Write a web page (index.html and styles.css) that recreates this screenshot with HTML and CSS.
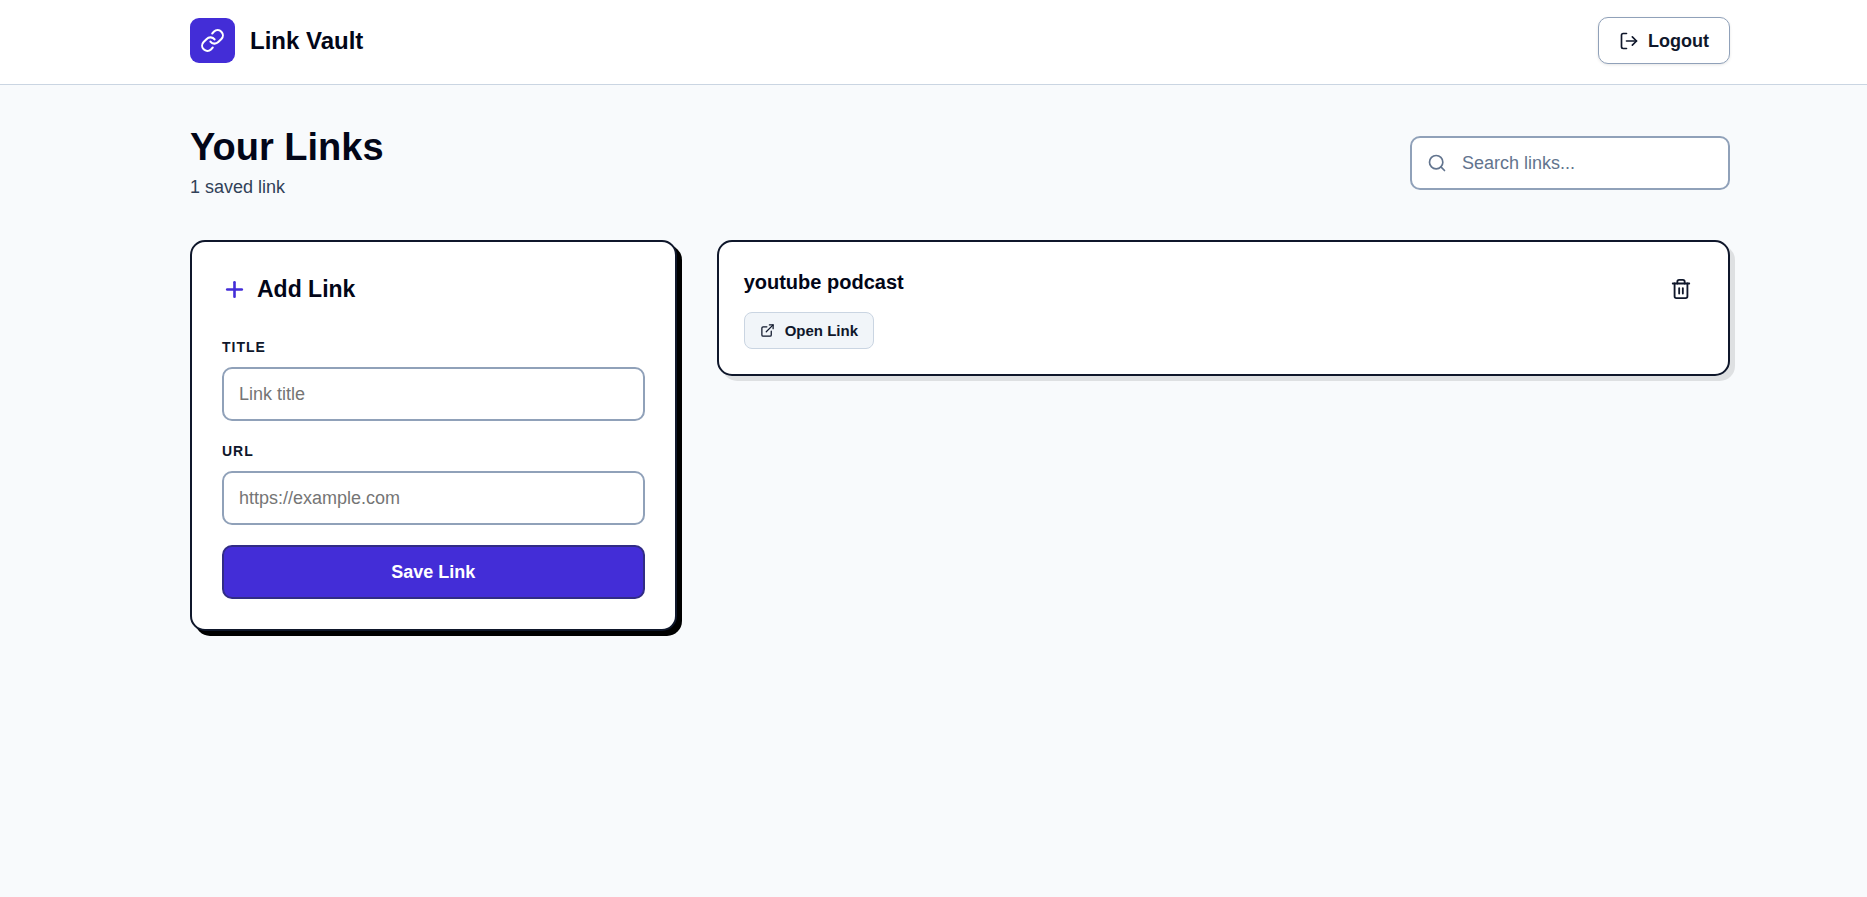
FILE: index.html
```html
<!DOCTYPE html>
<html lang="en">
<head>
    <meta charset="UTF-8">
    <meta name="viewport" content="width=device-width, initial-scale=1.0">
    <title>Link Vault</title>
    <link rel="stylesheet" href="styles.css">
</head>
<body>
    <header class="header">
        <div class="brand">
            <span class="brand-logo">
                <svg class="icon-brand" viewBox="0 0 24 24"><path d="M10 13a5 5 0 0 0 7.54.54l3-3a5 5 0 0 0-7.07-7.07l-1.72 1.71"/><path d="M14 11a5 5 0 0 0-7.54-.54l-3 3a5 5 0 0 0 7.07 7.07l1.71-1.71"/></svg>
            </span>
            <span class="brand-name">Link Vault</span>
        </div>
        <button class="logout-button" type="button">
            <svg class="icon-logout" viewBox="0 0 24 24"><path d="M9 21H5a2 2 0 0 1-2-2V5a2 2 0 0 1 2-2h4"/><path d="m16 17 5-5-5-5"/><path d="M21 12H9"/></svg>
            Logout
        </button>
    </header>

    <main class="page">
        <div class="page-top">
            <div>
                <h1>Your Links</h1>
                <p class="link-count">1 saved link</p>
            </div>
            <label class="search">
                <svg class="icon-search" viewBox="0 0 24 24"><circle cx="11" cy="11" r="8"/><path d="m21 21-4.3-4.3"/></svg>
                <input class="search-input" type="text" placeholder="Search links..." aria-label="Search links">
            </label>
        </div>

        <div class="columns">
            <form class="card add-card">
                <h2><svg class="icon-plus" viewBox="0 0 24 24"><path d="M5 12h14"/><path d="M12 5v14"/></svg>Add Link</h2>
                <label class="field-label" for="title">TITLE</label>
                <input class="field-input" id="title" type="text" placeholder="Link title">
                <label class="field-label" for="url">URL</label>
                <input class="field-input" id="url" type="url" placeholder="https://example.com">
                <button class="save-button" type="button">Save Link</button>
            </form>

            <section class="card link-card">
                <div>
                    <h3>youtube podcast</h3>
                    <a class="open-link" href="#">
                        <svg class="icon-open" viewBox="0 0 24 24"><path d="M15 3h6v6"/><path d="M10 14 21 3"/><path d="M18 13v6a2 2 0 0 1-2 2H5a2 2 0 0 1-2-2V8a2 2 0 0 1 2-2h6"/></svg>
                        Open Link
                    </a>
                </div>
                <button class="delete-button" type="button" aria-label="Delete link">
                    <svg class="icon-trash" viewBox="0 0 24 24"><path d="M3 6h18"/><path d="M19 6v14a2 2 0 0 1-2 2H7a2 2 0 0 1-2-2V6"/><path d="M8 6V4a2 2 0 0 1 2-2h4a2 2 0 0 1 2 2v2"/><path d="M10 11v6"/><path d="M14 11v6"/></svg>
                </button>
            </section>
        </div>
    </main>
</body>
</html>
```
FILE: styles.css
```css
* {
    box-sizing: border-box;
}

body {
    margin: 0;
    min-height: 100vh;
    background: #f8fafc;
    color: #0f172b;
    font-family: "Liberation Sans", Arial, sans-serif;
    font-size: 18px;
    line-height: 26px;
}

h1,
h2,
h3,
p {
    margin: 0;
    color: #020618;
}

button,
input {
    font: inherit;
}

button {
    cursor: pointer;
}

svg {
    flex: none;
    fill: none;
    stroke: currentColor;
    stroke-width: 2;
    stroke-linecap: round;
    stroke-linejoin: round;
}

.header {
    display: flex;
    align-items: center;
    justify-content: space-between;
    padding: 17px 137px 20px 190px;
    background: #fff;
    border-bottom: 1px solid #cad5e2;
}

.brand {
    display: flex;
    align-items: center;
    gap: 15px;
}

.brand-logo {
    display: flex;
    align-items: center;
    justify-content: center;
    width: 45px;
    height: 45px;
    border-radius: 9px;
    background: #432dd7;
    color: #fff;
}

.icon-brand {
    width: 25px;
    height: 25px;
}

.brand-name {
    color: #020618;
    font-size: 24px;
    font-weight: bold;
}

.logout-button {
    display: flex;
    align-items: center;
    gap: 9px;
    height: 47px;
    padding: 0 20px;
    border: 1px solid #90a1b9;
    border-radius: 10px;
    background: #fff;
    color: #0f172b;
    font-weight: bold;
    box-shadow: 0 1px 3px rgba(0, 0, 0, 0.1);
}

.icon-logout {
    width: 20px;
    height: 20px;
}

.page {
    padding: 40px 137px 40px 190px;
}

.page-top {
    display: flex;
    align-items: center;
    justify-content: space-between;
    margin-bottom: 40px;
}

h1 {
    font-size: 38px;
    line-height: 44px;
}

.link-count {
    margin-top: 5px;
    color: #314158;
}

.search {
    display: flex;
    align-items: center;
    gap: 15px;
    width: 320px;
    height: 54px;
    padding: 0 15px;
    border: 2px solid #90a1b9;
    border-radius: 10px;
    background: #fff;
    color: #62748e;
}

.icon-search {
    width: 20px;
    height: 20px;
}

.search-input {
    flex: 1;
    min-width: 0;
    padding: 0;
    border: 0;
    outline: 0;
    background: none;
}

.search-input::placeholder {
    color: #62748e;
}

.columns {
    display: grid;
    grid-template-columns: repeat(12, 1fr);
    gap: 40px;
    align-items: start;
}

.card {
    border: 2px solid #0f172b;
    border-radius: 15px;
    background: #fff;
}

.add-card {
    display: flex;
    flex-direction: column;
    grid-column: span 4;
    padding: 30px;
    box-shadow: 5px 5px 0 #000;
}

h2 {
    display: flex;
    align-items: center;
    gap: 10px;
    margin-bottom: 30px;
    font-size: 23px;
    line-height: 35px;
}

.icon-plus {
    width: 25px;
    height: 25px;
    color: #432dd7;
    stroke-width: 2.5;
}

.field-label {
    margin-bottom: 10px;
    font-size: 14px;
    font-weight: bold;
    letter-spacing: 1px;
    line-height: 20px;
}

.field-input {
    height: 54px;
    margin-bottom: 20px;
    padding: 0 15px;
    border: 2px solid #90a1b9;
    border-radius: 10px;
    background: #fff;
}

.field-input::placeholder {
    color: #757575;
}

.save-button {
    height: 54px;
    border: 2px solid #312c85;
    border-radius: 10px;
    background: #432dd7;
    color: #fff;
    font-weight: bold;
}

.link-card {
    display: flex;
    align-items: flex-start;
    justify-content: space-between;
    grid-column: span 8;
    padding: 25px;
    box-shadow: 5px 5px 0 rgba(0, 0, 0, 0.1);
}

h3 {
    margin-bottom: 15px;
    font-size: 20px;
    line-height: 30px;
}

.open-link {
    display: flex;
    align-items: center;
    gap: 10px;
    width: fit-content;
    padding: 5px 15px;
    border: 1px solid #cad5e2;
    border-radius: 8px;
    background: #f1f5f9;
    color: #0f172b;
    font-size: 15px;
    font-weight: bold;
    line-height: 25px;
    text-decoration: none;
}

.icon-open {
    width: 15px;
    height: 15px;
}

.delete-button {
    display: flex;
    padding: 11px;
    border: 0;
    background: none;
    color: #0f172b;
}

.icon-trash {
    width: 22px;
    height: 22px;
}
```
